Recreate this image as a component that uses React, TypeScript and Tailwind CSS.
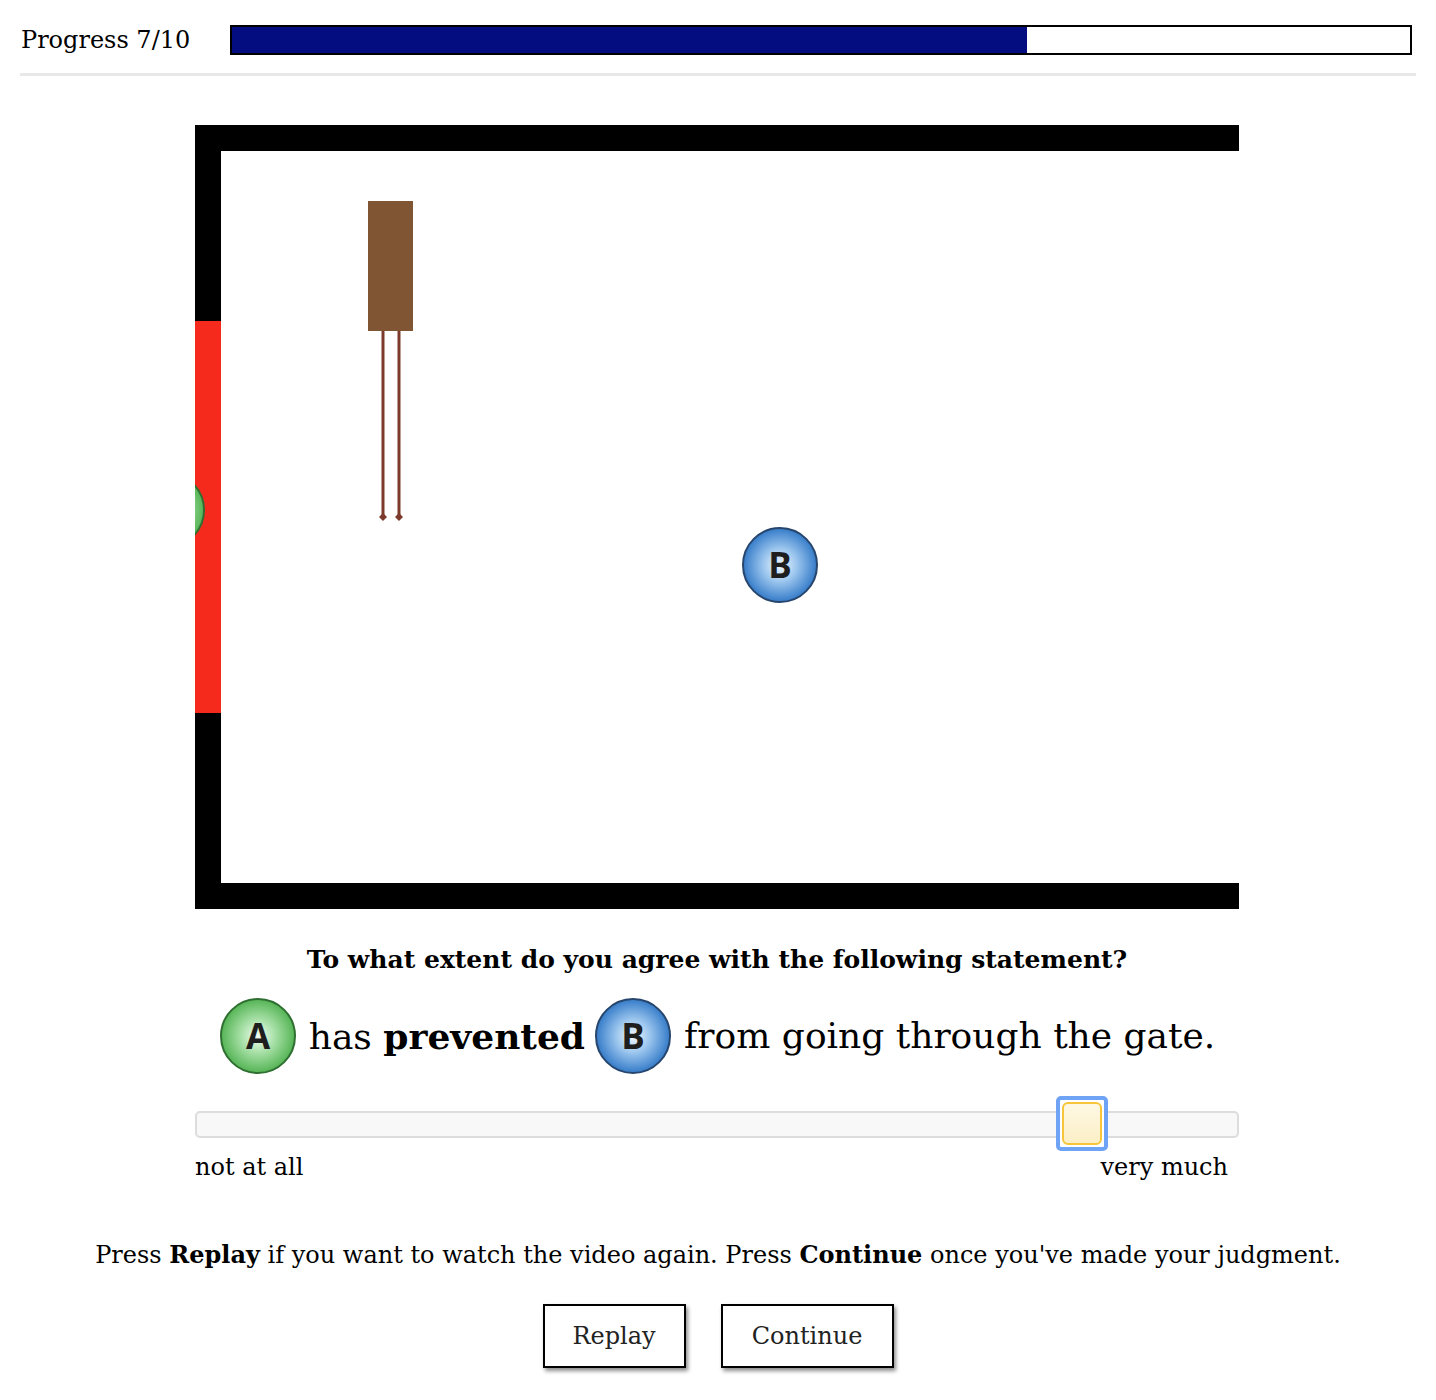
import React from "react";

const serif = { fontFamily: '"DejaVu Serif", "Liberation Serif", serif' };

function Ball({ letter, color }: { letter: string; color: "green" | "blue" }) {
  const id = `grad-${color}-${letter}`;
  const stops =
    color === "green"
      ? ["#f4fcf4", "#a8e0a8", "#5cb85c", "#2f6f31"]
      : ["#f4f8fd", "#9cc6ee", "#3e82cc", "#27466e"];
  return (
    <svg width="78" height="78" viewBox="0 0 78 78" className="shrink-0">
      <defs>
        <radialGradient id={id} cx="50%" cy="50%" r="50%">
          <stop offset="0%" stopColor={stops[0]} />
          <stop offset="45%" stopColor={stops[1]} />
          <stop offset="95%" stopColor={stops[2]} />
        </radialGradient>
      </defs>
      <circle cx="39" cy="39" r="37" fill={`url(#${id})`} stroke={stops[3]} strokeWidth="2" />
      <text
        x="39"
        y="52"
        textAnchor="middle"
        fontSize="35"
        fontWeight="700"
        fill="#1e1e1e"
        fontFamily='"Open Sans", "DejaVu Sans", sans-serif'
      >
        {letter}
      </text>
    </svg>
  );
}

function Scene() {
  return (
    <svg width="1044" height="784" viewBox="0 0 1044 784" className="block">
      <defs>
        <radialGradient id="scene-green" cx="50%" cy="50%" r="50%">
          <stop offset="0%" stopColor="#f4fcf4" />
          <stop offset="45%" stopColor="#a8e0a8" />
          <stop offset="95%" stopColor="#5cb85c" />
        </radialGradient>
        <radialGradient id="scene-blue" cx="50%" cy="50%" r="50%">
          <stop offset="0%" stopColor="#f4f8fd" />
          <stop offset="45%" stopColor="#9cc6ee" />
          <stop offset="95%" stopColor="#3e82cc" />
        </radialGradient>
      </defs>
      {/* walls */}
      <rect x="0" y="0" width="1044" height="26" fill="#000" />
      <rect x="0" y="758" width="1044" height="26" fill="#000" />
      <rect x="0" y="0" width="26" height="784" fill="#000" />
      {/* gate */}
      <rect x="0" y="196" width="26" height="392" fill="#f52a1c" />
      {/* agent A leaving */}
      <circle cx="-28" cy="385" r="37" fill="url(#scene-green)" stroke="#2f6f31" strokeWidth="2" />
      {/* box with legs */}
      <rect x="173" y="76" width="45" height="130" fill="#7f5533" />
      <line x1="188" y1="206" x2="188" y2="392" stroke="#7b3a2c" strokeWidth="3" />
      <line x1="204" y1="206" x2="204" y2="392" stroke="#7b3a2c" strokeWidth="3" />
      <path d="M188 388 L192 392 L188 396 L184 392 Z" fill="#7b3a2c" />
      <path d="M204 388 L208 392 L204 396 L200 392 Z" fill="#7b3a2c" />
      {/* agent B */}
      <circle cx="585" cy="440" r="37" fill="url(#scene-blue)" stroke="#27466e" strokeWidth="2" />
      <text
        x="585"
        y="453"
        textAnchor="middle"
        fontSize="35"
        fontWeight="700"
        fill="#1e1e1e"
        fontFamily='"Open Sans", "DejaVu Sans", sans-serif'
      >
        B
      </text>
    </svg>
  );
}

export default function App() {
  const progress = 0.675;
  return (
    <div className="min-h-[1400px] bg-white text-black" style={serif}>
      {/* header */}
      <div className="mx-[20px] pt-[25px]">
        <div className="flex items-center">
          <div className="w-[210px] pl-[1px] text-[24px] leading-[30px]">Progress 7/10</div>
          <div className="flex-1 mr-[4px] h-[30px] border-2 border-black bg-white">
            <div className="h-full bg-[#040d80]" style={{ width: `${progress * 100}%` }} />
          </div>
        </div>
        <div className="mt-[18px] h-[3px] bg-[#e8e8e8]" />
      </div>

      {/* scene */}
      <div className="ml-[195px] mt-[49px] w-[1044px] h-[784px] overflow-hidden">
        <Scene />
      </div>

      {/* question */}
      <div className="ml-[195px] w-[1044px]">
        <p className="mt-[36px] text-center text-[25px] font-bold leading-[30px]">
          To what extent do you agree with the following statement?
        </p>
        <div className="mt-[22px] flex items-center justify-center text-[36px] leading-[50px]">
          <Ball letter="A" color="green" />
          <span className="ml-[12px] mr-[9px]">
            has <b>prevented</b>
          </span>
          <Ball letter="B" color="blue" />
          <span className="ml-[12px]">from going through the gate.</span>
        </div>

        {/* slider */}
        <div className="relative mt-[36px] h-[27px] rounded-[5px] border-2 border-[#dddddd] bg-[#f8f8f8]">
          <div className="absolute left-[859px] top-[-17px] w-[52px] h-[55px] rounded-[5px] border-[4px] border-[#6fa3f5] bg-white p-[2px]">
            <div className="h-full w-full rounded-[6px] border-2 border-[#f8c53a] bg-gradient-to-b from-[#fef8e4] to-[#fcefc6]" />
          </div>
        </div>
        <div className="mt-[14px] flex justify-between pr-[11px] text-[24px] leading-[30px]">
          <span>not at all</span>
          <span>very much</span>
        </div>
      </div>

      {/* instructions */}
      <p className="mt-[58px] text-center text-[24px] leading-[30px]">
        Press <b>Replay</b> if you want to watch the video again. Press <b>Continue</b> once you've made your judgment.
      </p>
      <div className="mt-[34px] flex justify-center gap-[35px]">
        <button className="w-[143px] h-[64px] border-2 border-black bg-white text-[24px] text-[#222] shadow-[2px_3px_4px_rgba(0,0,0,0.45)]">
          Replay
        </button>
        <button className="w-[173px] h-[64px] border-2 border-black bg-white text-[24px] text-[#222] shadow-[2px_3px_4px_rgba(0,0,0,0.45)]">
          Continue
        </button>
      </div>
    </div>
  );
}
